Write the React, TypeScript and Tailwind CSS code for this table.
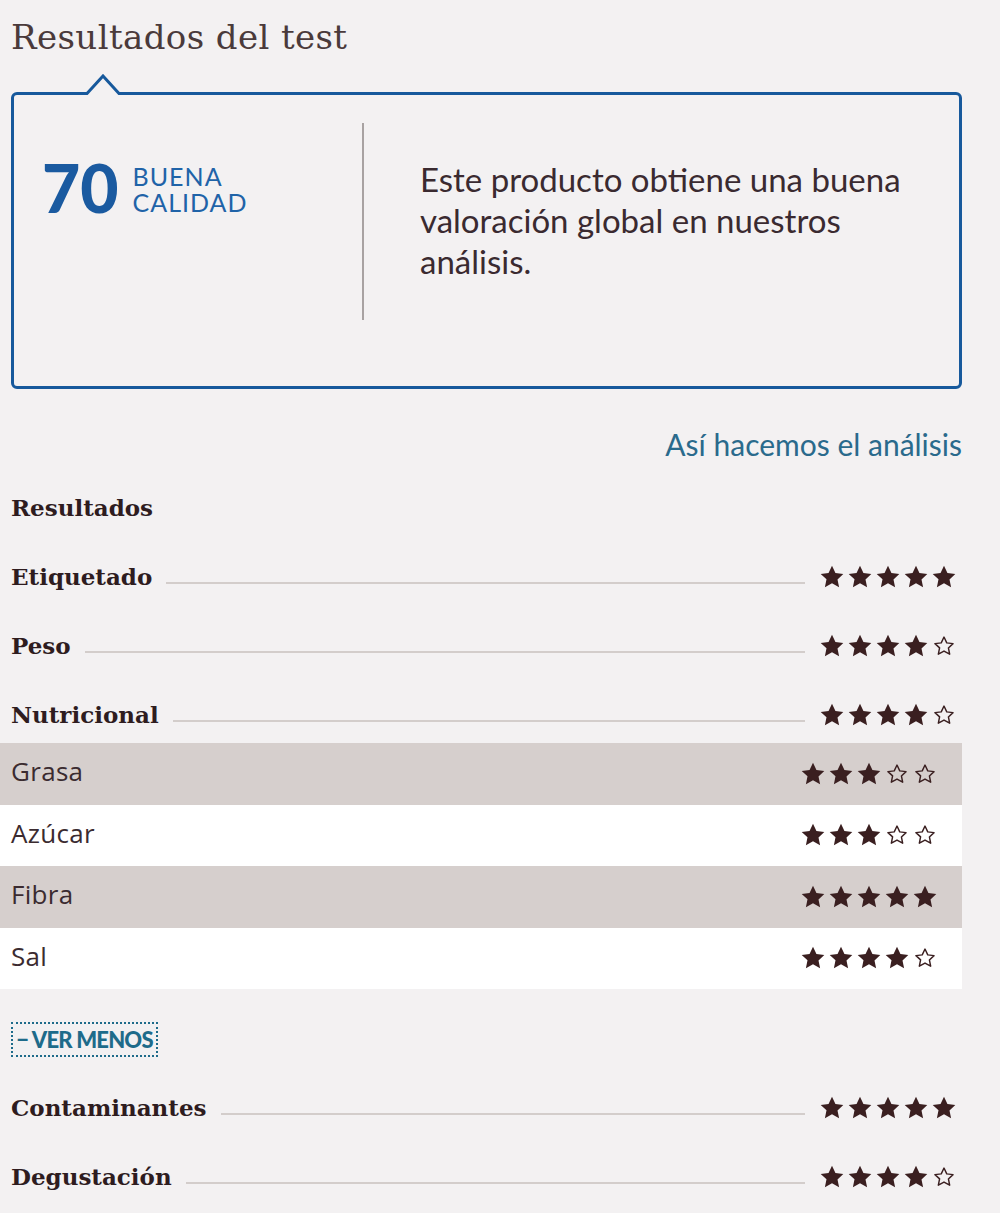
import React from "react";

const STAR = "M12 0.8l3.45 7.3 7.85.95-5.8 5.35 1.6 7.9L12 18.3l-7.1 3.95 1.6-7.9-5.8-5.35 7.85-.95z";

function Star({ filled }: { filled: boolean }) {
  if (filled) {
    return (
      <svg width="24" height="24" viewBox="0 0 24 24" className="shrink-0">
        <path d={STAR} fill="#3a1f20" />
      </svg>
    );
  }
  return (
    <svg width="24" height="24" viewBox="0 0 24 24" className="shrink-0">
      <g transform="translate(12 12) scale(0.8) translate(-12 -12)">
        <path d={STAR} fill="none" stroke="#3a1f20" strokeWidth="1.8" strokeLinejoin="round" />
      </g>
    </svg>
  );
}

function Stars({ n }: { n: number }) {
  return (
    <div className="flex gap-[4px]">
      {[0, 1, 2, 3, 4].map((i) => (
        <Star key={i} filled={i < n} />
      ))}
    </div>
  );
}

const serif = { fontFamily: '"DejaVu Serif", serif' };

function MainRow({ label, n }: { label: string; n: number }) {
  return (
    <div className="flex h-[56px] items-center pl-[11px] pr-[6px]">
      <span className="text-[23px] font-bold text-[#2e1c1f]" style={serif}>
        {label}
      </span>
      <div className="ml-[14px] mr-[15px] mt-[12px] h-[2px] flex-1 bg-[#d3cdcb]" />
      <Stars n={n} />
    </div>
  );
}

function SubRow({ label, n, grey }: { label: string; n: number; grey: boolean }) {
  return (
    <div
      className={`flex h-[61.5px] items-center justify-between pl-[11px] pr-[25px] ${grey ? "bg-[#d6cfcd]" : "bg-white"}`}
    >
      <span
        className="-mt-[4px] text-[26px] tracking-[0.3px] text-[#3b2b30]"
        style={{ fontFamily: '"Open Sans", sans-serif' }}
      >
        {label}
      </span>
      <Stars n={n} />
    </div>
  );
}

export default function App() {
  return (
    <div className="min-h-[1213px] w-[1000px] bg-[#f3f1f2]" style={{ fontFamily: "Lato, sans-serif" }}>
      <div className="w-[962px]">
        <div className="h-[92px] pl-[11px] pt-[17px]">
          <h1 className="text-[34px] leading-[40px] tracking-[0.4px] text-[#4a3a3b]" style={serif}>
            Resultados del test
          </h1>
        </div>

        <div className="relative ml-[11px] flex h-[297px] items-start rounded-[6px] border-[3px] border-[#17599c]">
          <svg className="absolute left-[70px] top-[-21px]" width="38" height="22" viewBox="0 0 38 22">
            <path d="M0 19.5 H3 L19 2 L35 19.5 H38 V22 H0 Z" fill="#f3f1f2" />
            <path d="M0 19.5 H3 L19 2 L35 19.5 H38" fill="none" stroke="#17599c" strokeWidth="3" />
          </svg>

          <div className="flex w-[348px] shrink-0 items-start pl-[28px] pt-[60px]">
            <span className="text-[66px] font-black leading-[66px] text-[#1a5aa0]">70</span>
            <div className="ml-[14px] mt-[8px] text-[25px] leading-[26px] tracking-[1px] text-[#1f63a8]">
              <div>BUENA</div>
              <div>CALIDAD</div>
            </div>
          </div>

          <div className="mt-[28px] h-[197px] w-[2px] shrink-0 bg-[#a8a2a2]" />

          <div className="pl-[56px] pt-[64px] pr-[40px] text-[33px] leading-[41px] text-[#3a2a30]">
            Este producto obtiene una buena valoración global en nuestros análisis.
          </div>
        </div>

        <div className="mt-[27px] flex h-[56px] items-center justify-end">
          <span className="text-[30px] text-[#2a6a8c]">Así hacemos el análisis</span>
        </div>

        <div className="mt-[8px] flex h-[56px] items-center pl-[11px]">
          <span className="text-[23px] font-bold text-[#2e1c1f]" style={serif}>
            Resultados
          </span>
        </div>

        <div className="mt-[13px] flex flex-col gap-[13px]">
          <MainRow label="Etiquetado" n={5} />
          <MainRow label="Peso" n={4} />
          <MainRow label="Nutricional" n={4} />
        </div>

        <div className="flex flex-col">
          <SubRow label="Grasa" n={3} grey />
          <SubRow label="Azúcar" n={3} grey={false} />
          <SubRow label="Fibra" n={5} grey />
          <SubRow label="Sal" n={4} grey={false} />
        </div>

        <div className="pl-[11px] pt-[33px]">
          <button className="flex h-[35px] w-[147px] items-center justify-center border-2 border-dotted border-[#1e6b8a] text-[22px] font-black leading-none tracking-[-0.8px] text-[#1e6b8a]">
            − VER MENOS
          </button>
        </div>

        <div className="mt-[23px] flex flex-col gap-[13px]">
          <MainRow label="Contaminantes" n={5} />
          <MainRow label="Degustación" n={4} />
        </div>
      </div>
    </div>
  );
}
